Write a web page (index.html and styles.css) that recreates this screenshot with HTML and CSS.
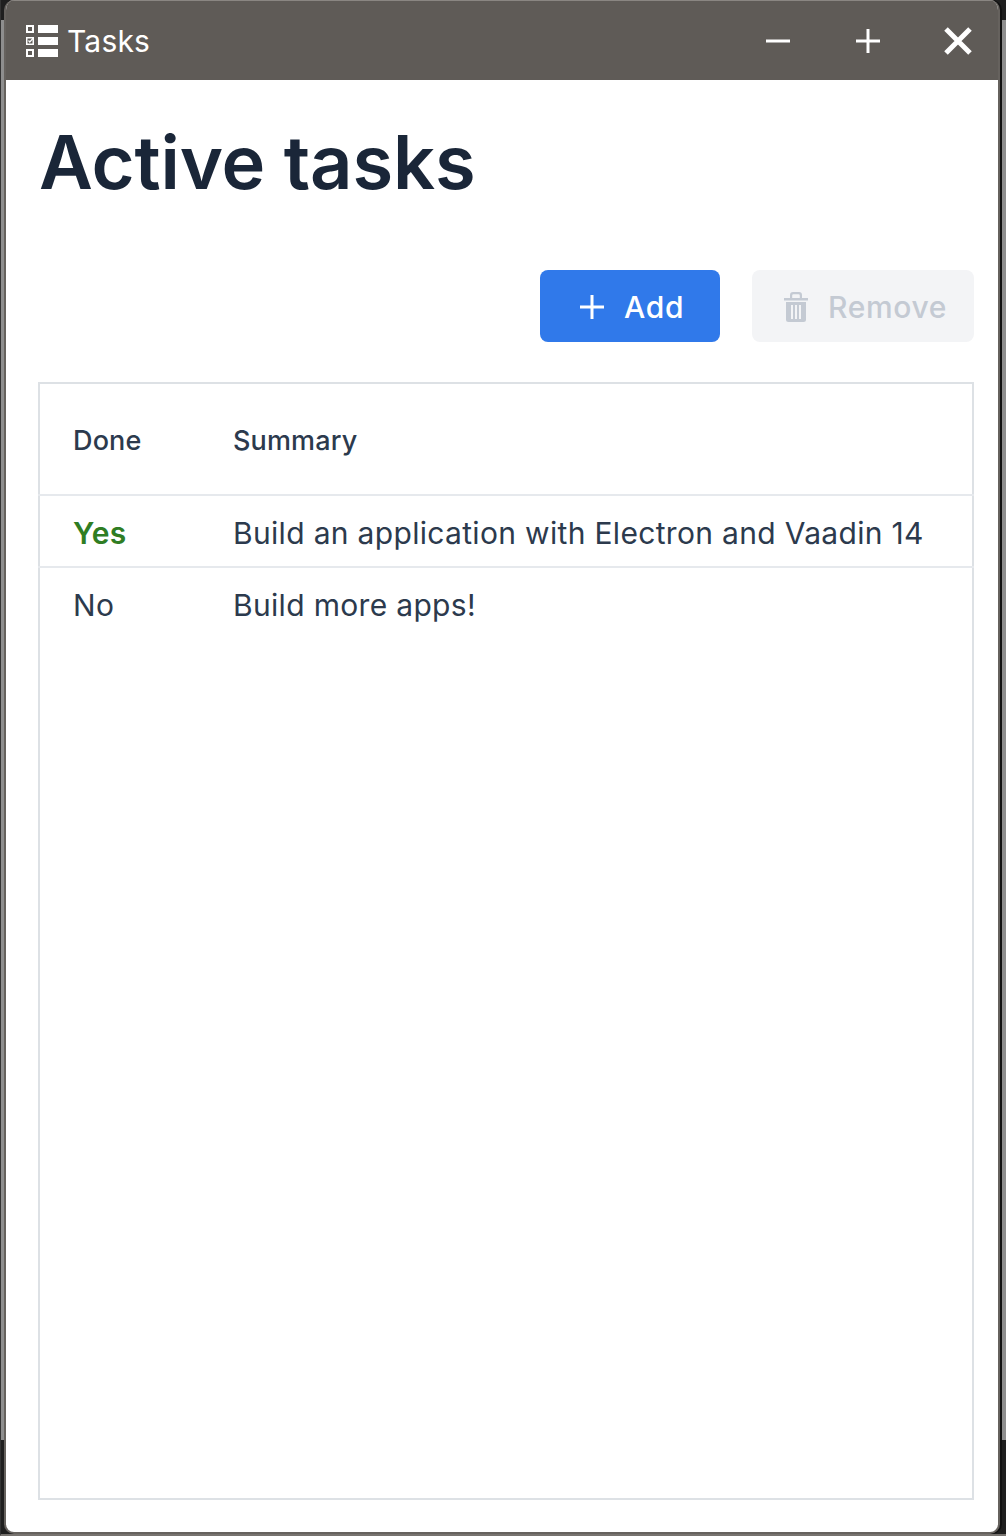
FILE: index.html
```html
<!DOCTYPE html>
<html lang="en">
<head>
    <meta charset="UTF-8">
    <meta name="viewport" content="width=device-width, initial-scale=1.0">
    <title>Tasks</title>
    <link rel="stylesheet" href="styles.css">
</head>
<body>

    <div class="ventana">
        <header class="barra">
            <svg class="icono-app" width="34" height="34" viewBox="0 0 34 34" fill="#fff">
                <path fill-rule="evenodd" d="M1 1h8v8H1zM3 3v4h4V3zM1 25h8v8H1zM3 27v4h4v-4zM1 13h8v8H1zM2.500 14.500v5h5v-5z"/>
                <path d="M13 1h20v8H13zM13 13h20v8H13zM13 25h20v8H13z"/>
                <path d="M3.500 16.500l1.300 1.500 4-4.500" fill="none" stroke="#fff" stroke-width="1.200"/>
            </svg>
            <span class="barra-titulo">Tasks</span>
            <div class="barra-botones">
                <svg width="26" height="26" viewBox="0 0 26 26"><path d="M1 13h24" stroke="#fff" stroke-width="3"/></svg>
                <svg width="26" height="26" viewBox="0 0 26 26"><path d="M1 13h24M13 1v24" stroke="#fff" stroke-width="3"/></svg>
                <svg class="cerrar" width="30" height="30" viewBox="0 0 30 30"><path d="M3 3l24 24M27 3L3 27" stroke="#fff" stroke-width="5"/></svg>
            </div>
        </header>

        <main class="contenido">
            <h1>Active tasks</h1>

            <div class="acciones">
                <button class="boton boton-primario">
                    <svg width="24" height="24" viewBox="0 0 24 24"><path d="M0 12h24M12 0v24" stroke="#fff" stroke-width="3"/></svg>
                    Add
                </button>
                <button class="boton boton-apagado" disabled>
                    <svg width="24" height="32" viewBox="0 0 24 32" fill="#c4cad3">
                        <path d="M0 7h24v2.500H0zM2 11h20v17.500a2.500 2.500 0 0 1-2.500 2.500h-15A2.500 2.500 0 0 1 2 28.500z"/>
                        <path d="M6 7V4a3 3 0 0 1 3-3h6a3 3 0 0 1 3 3v3h-2.200V4.500a1.200 1.200 0 0 0-1.200-1.200H9.400a1.200 1.200 0 0 0-1.200 1.200V7z"/>
                        <path d="M7 14h2v14H7zM11 14h2v14h-2zM15 14h2v14h-2z" fill="#f3f4f6"/>
                    </svg>
                    Remove
                </button>
            </div>

            <table class="tabla">
                <thead>
                    <tr>
                        <th class="col-hecho">Done</th>
                        <th>Summary</th>
                    </tr>
                </thead>
                <tbody>
                    <tr>
                        <td class="si">Yes</td>
                        <td>Build an application with Electron and Vaadin 14</td>
                    </tr>
                    <tr class="ultima">
                        <td>No</td>
                        <td>Build more apps!</td>
                    </tr>
                    <tr class="relleno">
                        <td></td>
                        <td></td>
                    </tr>
                </tbody>
            </table>
        </main>
    </div>

</body>
</html>
```

FILE: styles.css
```css
html {
    height: 100%;
}
body {
    box-sizing: border-box;
    height: 1536px;
    margin: 0;
    border-left: 1px solid #333;
    border-bottom: 2px solid #77736f;
    background: linear-gradient(to bottom, #1f1f1f 0, #1f1f1f 20px, #8e8e8e 20px, #8e8e8e 1440px, #1f1f1f 1440px);
    font-family: 'Inter', 'Liberation Sans', sans-serif;
    color: #2c3a4d;
}
.ventana {
    box-sizing: border-box;
    height: 1534px;
    margin-left: 3px;
    margin-right: 6px;
    display: flex;
    flex-direction: column;
    border-radius: 10px;
    border: solid #66625e;
    border-width: 0 2px 2px 2px;
    background: white;
    overflow: hidden;
    box-shadow: 1px 0 0 #111, 2px 0 0 #111;
}
.barra {
    height: 80px;
    margin: 0 -2px;
    flex: none;
    display: flex;
    align-items: center;
    padding-left: 21px;
    padding-right: 27px;
    background-color: #5f5b57;
    border-top: 1px solid #8a8682;
    box-sizing: border-box;
    color: white;
}
.icono-app {
    margin-right: 8px;
}
.barra-titulo {
    font-size: 30px;
    letter-spacing: 0.2px;
}
.barra-botones {
    margin-left: auto;
    display: flex;
    align-items: center;
    gap: 64px;
}
.cerrar {
    margin-left: -2px;
}
.contenido {
    flex: 1;
    display: flex;
    flex-direction: column;
    padding: 0 24px 32px 32px;
    min-height: 0;
}
h1 {
    margin: 38px 0 0 1px;
    font-size: 74px;
    line-height: 88px;
    font-weight: 600;
    color: #1a2638;
    letter-spacing: -0.15px;
}
.acciones {
    display: flex;
    justify-content: flex-end;
    gap: 32px;
    margin-top: 64px;
    margin-bottom: 40px;
}
.boton {
    height: 72px;
    display: flex;
    align-items: center;
    gap: 20px;
    border: none;
    border-radius: 8px;
    padding: 2px 0 0;
    font-family: inherit;
    font-size: 30px;
    font-weight: 500;
    letter-spacing: 0.65px;
}
.boton-primario {
    width: 180px;
    padding-left: 40px;
    background-color: #3079ea;
    color: white;
}
.boton-apagado {
    width: 222px;
    padding-left: 32px;
    background-color: #f3f4f6;
    color: #c4cad3;
}
.tabla {
    flex: 1;
    width: 100%;
    height: 1119px;
    border-collapse: collapse;
    border: 2px solid #dde1e5;
    font-size: 30px;
    letter-spacing: 0.32px;
}
.tabla th {
    height: 108px;
    padding: 2px 0 0 34px;
    text-align: left;
    font-size: 27px;
    font-weight: 500;
    letter-spacing: 0.15px;
    border-bottom: 2px solid #e6e9ed;
}
.tabla td {
    height: 66px;
    padding: 4px 0 0 34px;
    border-bottom: 2px solid #e6e9ed;
}
.tabla th:first-child, .tabla td:first-child {
    padding-left: 33px;
}
.col-hecho {
    width: 126px;
}
.si {
    color: #2f7d23;
    font-weight: 600;
}
.tabla .ultima td {
    border-bottom: none;
}
.tabla .relleno td {
    height: auto;
    padding-top: 0;
    border-bottom: none;
}
```
